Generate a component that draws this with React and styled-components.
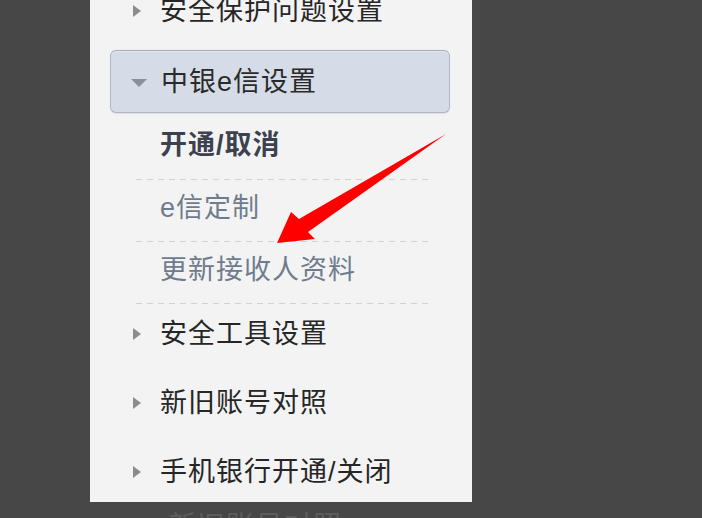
import styled, { createGlobalStyle } from "styled-components";

const GlobalStyle = createGlobalStyle`
    html, body {
        margin: 0;
        padding: 0;
        background: #474747;
    }
    body {
        font-family: "Liberation Sans", "Noto Sans CJK SC", sans-serif;
    }
`;

const Page = styled.div`
    width: 702px;
    height: 518px;
    overflow: hidden;
    background: #474747;
`;

const Panel = styled.div`
    margin-left: 90px;
    width: 382px;
    height: 502px;
    background: #f3f3f3;
    overflow: hidden;
    position: relative;
`;

const Menu = styled.ul`
    list-style: none;
    margin: -19px 0 0;
    padding: 0;
`;

const Row = styled.li`
    display: flex;
    align-items: flex-start;
    height: 69px;
    padding: 15px 0 0 43px;
    box-sizing: border-box;
    gap: 19px;
    font-family: "Liberation Sans", "Noto Sans CJK SC", sans-serif;
    font-size: 27px;
    letter-spacing: 1px;
    line-height: 30px;
    color: #262626;
`;

const RightTri = styled.span`
    width: 0;
    height: 0;
    margin-top: 9px;
    border-top: 6px solid transparent;
    border-bottom: 6px solid transparent;
    border-left: 8px solid #8c8c8c;
`;

const ActiveRow = styled.li`
    display: flex;
    align-items: center;
    gap: 14px;
    height: 63px;
    margin: 0 22px 0 20px;
    padding-left: 20px;
    box-sizing: border-box;
    border: 1px solid #b1b8c3;
    border-top-color: #a4abb6;
    border-radius: 6px;
    background: #d5dce7;
    box-shadow: inset 0 1px 0 #e3e8ef, 0 1px 1px rgba(0, 0, 0, 0.08);
    font-family: "Liberation Sans", "Noto Sans CJK SC", sans-serif;
    font-size: 27px;
    letter-spacing: 1px;
    line-height: 30px;
    color: #2a2a2a;
`;

const DownTri = styled.span`
    width: 0;
    height: 0;
    margin-top: 2px;
    border-left: 8px solid transparent;
    border-right: 8px solid transparent;
    border-top: 8px solid #8a8f99;
`;

const SubList = styled.ul`
    list-style: none;
    margin: 0 0 0 46px;
    padding: 0;
    width: 294px;
`;

const SubItem = styled.li`
    height: ${p => p.$first ? 67 : 62}px;
    padding: ${p => p.$first ? 17 : 13}px 0 0 24px;
    box-sizing: border-box;
    background: repeating-linear-gradient(to right, #d2d2d2 0 6px, transparent 6px 11px) left bottom / 100% 1px no-repeat;
    font-family: "Liberation Sans", "Noto Sans CJK SC", sans-serif;
    font-size: 27px;
    letter-spacing: 1px;
    line-height: 30px;
    font-weight: ${p => p.$current ? 700 : 400};
    color: ${p => p.$current ? "#3b424e" : "#6f7c8e"};
`;

const Pointer = styled.svg`
    position: absolute;
    left: 0;
    top: 0;
    pointer-events: none;
`;

const Ghost = styled.div`
    margin: 7px 0 0 168px;
    font-family: "Noto Sans CJK SC", sans-serif;
    font-size: 28px;
    letter-spacing: 1px;
    line-height: 30px;
    color: #5d5d5d;
`;

const mainItems = ["安全工具设置", "新旧账号对照", "手机银行开通/关闭"];
const subItems = ["开通/取消", "e信定制", "更新接收人资料"];

export default function App() {
    return (
        <Page>
            <GlobalStyle />
            <Panel>
                <Menu>
                    <Row>
                        <RightTri />
                        <span>安全保护问题设置</span>
                    </Row>
                    <ActiveRow>
                        <DownTri />
                        <span>中银e信设置</span>
                    </ActiveRow>
                    <li>
                        <SubList>
                            {subItems.map((s, i) => (
                                <SubItem key={s} $first={i === 0} $current={i === 0}>
                                    {s}
                                </SubItem>
                            ))}
                        </SubList>
                    </li>
                    {mainItems.map(m => (
                        <Row key={m}>
                            <RightTri />
                            <span>{m}</span>
                        </Row>
                    ))}
                </Menu>
                <Pointer width="382" height="502" viewBox="90 0 382 502">
                    <polygon
                        points="277,243 291,212 299,219 446,134 308,232 315,239"
                        fill="#ff0000"
                    />
                </Pointer>
            </Panel>
            <Ghost>新旧账号对照</Ghost>
        </Page>
    );
}
